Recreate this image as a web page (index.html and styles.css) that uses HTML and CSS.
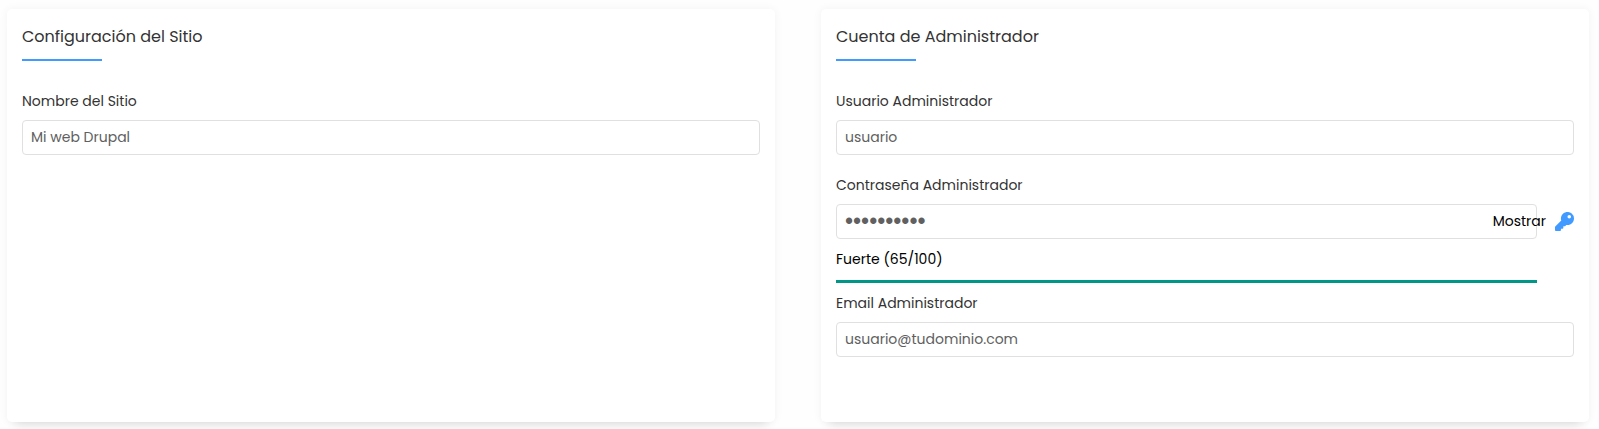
FILE: index.html
```html
<!DOCTYPE html>
<html lang="es">
<head>
  <meta charset="UTF-8" />
  <meta name="viewport" content="width=device-width, initial-scale=1.0" />
  <title>Configuración del Sitio</title>
  <link rel="stylesheet" href="styles.css">
</head>
<body>
  <form class="panels">
    <section class="card">
      <h2>Configuración del Sitio</h2>
      <div class="field">
        <label for="site-name">Nombre del Sitio</label>
        <input type="text" id="site-name" value="Mi web Drupal" />
      </div>
    </section>

    <section class="card">
      <h2>Cuenta de Administrador</h2>
      <div class="field">
        <label for="admin-user">Usuario Administrador</label>
        <input type="text" id="admin-user" value="usuario" />
      </div>
      <div class="field password-field">
        <label for="admin-pass">Contraseña Administrador</label>
        <div class="password-row">
          <input type="password" id="admin-pass" value="contrasena" />
          <button type="button" class="show-btn">Mostrar</button>
          <button type="button" class="key-btn" aria-label="Generar contraseña">
            <svg viewBox="0 0 512 512" width="19" height="19" fill="currentColor" aria-hidden="true">
              <path d="M512 176c0 97-79 176-176 176-11 0-22-1-33-3l-24 27a24 24 0 0 1-18 8h-37v40a24 24 0 0 1-24 24h-40v40a24 24 0 0 1-24 24H24a24 24 0 0 1-24-24v-78c0-7 3-13 7-17l162-162a176 176 0 1 1 343-55zM336 128a48 48 0 1 0 96 0 48 48 0 1 0-96 0z" />
            </svg>
          </button>
        </div>
        <div class="strength">
          <p>Fuerte (65/100)</p>
          <div class="strength-bar"></div>
        </div>
      </div>
      <div class="field">
        <label for="admin-email">Email Administrador</label>
        <input type="email" id="admin-email" value="usuario@tudominio.com" />
      </div>
    </section>
  </form>
</body>
</html>
```

FILE: styles.css
```css
* {
  box-sizing: border-box;
}
body {
  margin: 0;
  padding: 9px 10px 7px 7px;
  background-color: #fefefe;
  color: #000;
  font-family: Poppins, Inter, sans-serif;
  font-size: 14px;
  line-height: 21px;
}
.panels {
  display: grid;
  grid-template-columns: 1fr 1fr;
  gap: 46px;
}
.card {
  padding: 16px 15px 65px;
  background-color: #fff;
  border-radius: 5px;
  box-shadow: 0 0 10px rgba(0, 0, 0, 0.05), 0 10px 10px -8px rgba(0, 0, 0, 0.13);
}
h2 {
  margin: 0 0 30px;
  color: #333;
  font-size: 16px;
  font-weight: 400;
  line-height: 24px;
}
h2::after {
  content: "";
  display: block;
  width: 80px;
  height: 2px;
  margin-top: 10px;
  background-color: #409aff;
}
.field + .field {
  margin-top: 20px;
}
.password-field + .field {
  margin-top: 10px;
}
label {
  display: block;
  margin-bottom: 8px;
  color: #333;
}
input {
  display: block;
  width: 100%;
  height: 35px;
  padding: 0 8px;
  border: 1px solid #e0e0e0;
  border-radius: 4px;
  background-color: #fff;
  color: #606060;
  font: inherit;
}
input[type="password"] {
  font-family: "Liberation Sans", Arial, sans-serif;
  font-size: 23px;
}
button {
  padding: 0;
  border: none;
  background: none;
  color: #000;
  font: inherit;
  cursor: pointer;
}
.password-row {
  position: relative;
  display: flex;
  align-items: center;
  gap: 18px;
}
.password-row input {
  flex: 1;
  min-width: 0;
}
.show-btn {
  position: absolute;
  right: 28px;
}
.key-btn {
  display: flex;
  color: #409aff;
}
.strength {
  margin: 10px 37px 0 0;
}
.strength p {
  margin: 0 0 10px;
}
.strength-bar {
  height: 3px;
  background-color: #009688;
}
```
